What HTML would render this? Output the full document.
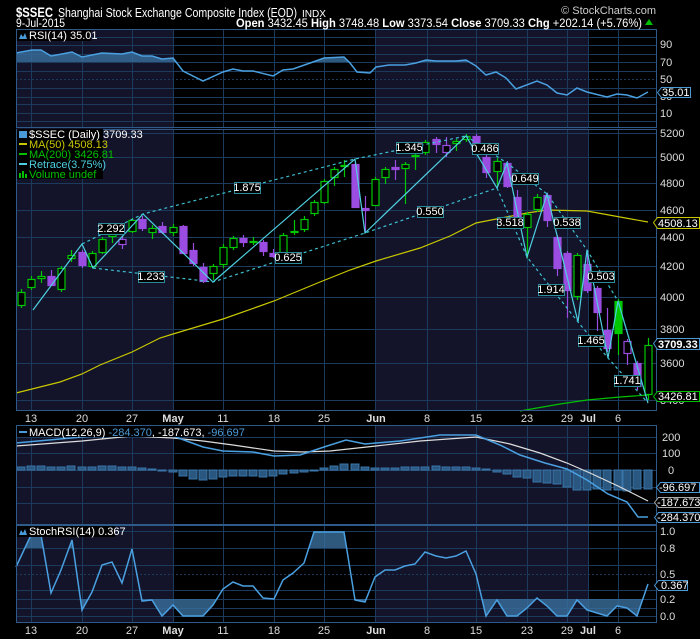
<!DOCTYPE html>
<html><head><meta charset="utf-8"><style>
html,body{margin:0;padding:0;background:#000;}
svg{display:block;font-family:"Liberation Sans",sans-serif;}
</style></head><body>
<svg id="s" width="700" height="639" viewBox="0 0 700 639" xmlns="http://www.w3.org/2000/svg">
<rect width="700" height="639" fill="#000"/>
<g fill="#13132a">
<rect x="16" y="29" width="157" height="381"/><rect x="375" y="29" width="213" height="381"/>
<rect x="16" y="425" width="157" height="197"/><rect x="375" y="425" width="213" height="197"/>
</g>
<g id="grid" stroke="#1c3a5c" stroke-width="1" fill="none"></g>
<g id="draw"></g>
<g fill="none" stroke="#2d5a88" stroke-width="1">
<rect x="16.5" y="29.5" width="640" height="98"/>
<rect x="16.5" y="129.5" width="640" height="281"/>
<rect x="16.5" y="425.5" width="640" height="99"/>
<rect x="16.5" y="525.5" width="640" height="97"/>
</g>
<text x="16" y="17" fill="#fff" font-size="14" font-weight="bold" textLength="37" lengthAdjust="spacingAndGlyphs">$SSEC</text>
<text x="58" y="17" fill="#fff" font-size="12.5" textLength="239" lengthAdjust="spacingAndGlyphs">Shanghai Stock Exchange Composite Index (EOD)</text>
<text x="302" y="17" fill="#fff" font-size="10.5" textLength="24" lengthAdjust="spacingAndGlyphs">INDX</text>
<text x="16" y="27" fill="#fff" font-size="11.5" textLength="49" lengthAdjust="spacingAndGlyphs">9-Jul-2015</text>
<text x="656" y="14" fill="#ccc" font-size="11" text-anchor="end">© StockCharts.com</text>
<text x="236" y="27" fill="#fff" font-size="11.5" textLength="406" lengthAdjust="spacingAndGlyphs"><tspan font-weight="bold">Open</tspan> 3432.45  <tspan font-weight="bold">High</tspan> 3748.48  <tspan font-weight="bold">Low</tspan> 3373.54  <tspan font-weight="bold">Close</tspan> 3709.33  <tspan font-weight="bold">Chg</tspan> +202.14 (+5.76%)</text>
<polygon points="645,25 653,25 649,19" fill="#00c000"/>
<rect x="17" y="30" width="74" height="11" fill="#000"/>
<path d="M19,39 L21,34 L23,37 L25,33 L27,39Z" fill="#4a9ad8"/>
<text x="29" y="39" fill="#fff" font-size="11">RSI(14) 35.01</text>
<rect x="17" y="129" width="86" height="50" fill="#000"/>
<rect x="19" y="131" width="8" height="7" fill="#4a9ad8"/>
<text x="29" y="138" fill="#fff" font-size="11">$SSEC (Daily) 3709.33</text>
<rect x="19" y="143" width="8" height="2" fill="#c8c800"/><text x="29" y="148" fill="#c8c800" font-size="11">MA(50) 4508.13</text>
<rect x="19" y="153" width="8" height="2" fill="#00c000"/><text x="29" y="158" fill="#00c000" font-size="11">MA(200) 3426.81</text>
<rect x="19" y="163" width="8" height="2" fill="#4fd0e0"/><text x="29" y="168" fill="#4fd0e0" font-size="11">Retrace(3.75%)</text>
<path d="M19,178V173H21V178ZM22,178V171H24V178ZM25,178V174H27V178Z" fill="#00c000"/><text x="29" y="178" fill="#00c000" font-size="11">Volume undef</text>
<rect x="17" y="426" width="202" height="11" fill="#000"/>
<rect x="19" y="431" width="8" height="2" fill="#4a9ad8"/>
<text x="29" y="436" fill="#fff" font-size="11">MACD(12,26,9) <tspan fill="#4a9ad8">-284.370</tspan>, -187.673, <tspan fill="#4a9ad8">-96.697</tspan></text>
<rect x="17" y="526" width="98" height="11" fill="#000"/>
<path d="M19,535 L21,530 L23,533 L25,529 L27,535Z" fill="#4a9ad8"/>
<text x="29" y="535" fill="#fff" font-size="11">StochRSI(14) 0.367</text>
<g fill="#ddd" font-size="11">
<text x="660" y="48">90</text><text x="660" y="66">70</text><text x="660" y="83">50</text><text x="660" y="100">30</text><text x="660" y="117">10</text>
<text x="660" y="137">5200</text><text x="660" y="161">5000</text><text x="660" y="187">4800</text><text x="660" y="214">4600</text><text x="660" y="241">4400</text><text x="660" y="270">4200</text><text x="660" y="301">4000</text><text x="660" y="333">3800</text><text x="660" y="367">3600</text><text x="660" y="404">3400</text>
<text x="662" y="441">200</text><text x="662" y="457">100</text><text x="668" y="474">0</text>
<text x="660" y="535">1.0</text><text x="660" y="552">0.8</text><text x="660" y="578">0.5</text><text x="660" y="603">0.2</text><text x="660" y="620">0.0</text>
</g>
<g font-size="11">
<path d="M657.5,92.5 L661.5,87.5 H690.5 V97.5 H661.5Z" fill="#000" stroke="#4a9ad8"/><text x="662" y="96" fill="#fff">35.01</text>
<path d="M653.5,222.5 L657.5,217.5 H699.5 V228.5 H657.5Z" fill="#000" stroke="#c8c800"/><text x="658" y="227" fill="#fff">4508.13</text>
<path d="M653.5,343.5 L657.5,338.5 H699.5 V349.5 H657.5Z" fill="#000" stroke="#4a9ad8"/><text x="658" y="348" fill="#fff" font-weight="bold">3709.33</text>
<path d="M653.5,396.5 L657.5,391.5 H699.5 V401.5 H657.5Z" fill="#000" stroke="#00c000"/><text x="658" y="400" fill="#fff">3426.81</text>
<path d="M656.5,487.5 L660.5,482.5 H699.5 V492.5 H660.5Z" fill="#000" stroke="#4a9ad8"/><text x="659" y="491" fill="#fff">-96.697</text>
<path d="M654.5,502.5 L658.5,497.5 H700.5 V507.5 H658.5Z" fill="#000" stroke="#aaa"/><text x="657" y="506" fill="#fff">-187.673</text>
<path d="M654.5,517.5 L658.5,512.5 H700.5 V522.5 H658.5Z" fill="#000" stroke="#4a9ad8"/><text x="657" y="521" fill="#fff">-284.370</text>
<path d="M654.5,585.5 L658.5,580.5 H687.5 V590.5 H658.5Z" fill="#000" stroke="#4a9ad8"/><text x="661" y="589" fill="#fff">0.367</text>
</g>
<g fill="#ddd" font-size="11" text-anchor="middle">
<text x="31" y="422">13</text><text x="82" y="422">20</text><text x="132" y="422">27</text><text x="173" y="422" font-weight="bold">May</text><text x="223" y="422">11</text><text x="274" y="422">18</text><text x="324" y="422">25</text><text x="376" y="422" font-weight="bold">Jun</text><text x="427" y="422">8</text><text x="476" y="422">15</text><text x="527" y="422">23</text><text x="567" y="422">29</text><text x="588" y="422" font-weight="bold">Jul</text><text x="618" y="422">6</text>
<text x="31" y="634">13</text><text x="82" y="634">20</text><text x="132" y="634">27</text><text x="173" y="634" font-weight="bold">May</text><text x="223" y="634">11</text><text x="274" y="634">18</text><text x="324" y="634">25</text><text x="376" y="634" font-weight="bold">Jun</text><text x="427" y="634">8</text><text x="476" y="634">15</text><text x="527" y="634">23</text><text x="567" y="634">29</text><text x="588" y="634" font-weight="bold">Jul</text><text x="618" y="634">6</text>
</g>
<g id="labels" font-size="11" fill="#fff" text-anchor="middle">
<text x="111" y="232">2.292</text><text x="151" y="280">1.233</text><text x="247" y="191">1.875</text><text x="288" y="261">0.625</text><text x="409" y="151">1.345</text><text x="430" y="215">0.550</text><text x="485" y="152">0.486</text><text x="525" y="182">0.649</text><text x="510" y="226">3.518</text><text x="567" y="226">0.538</text><text x="551" y="293">1.914</text><text x="601" y="280">0.503</text><text x="591" y="344">1.465</text><text x="627" y="384">1.741</text>
</g>
<script>
var NS="http://www.w3.org/2000/svg";
function el(p,t,a){var e=document.createElementNS(NS,t);for(var k in a)e.setAttribute(k,a[k]);p.appendChild(e);return e;}
var G=document.getElementById('grid'),D=document.getElementById('draw');
var vx=[31,82,132,173,223,274,324,375,427,476,527,567,588,618];
vx.forEach(function(x){[[29,128],[129,411],[425,525],[525,623]].forEach(function(r){el(G,'line',{x1:x+.5,x2:x+.5,y1:r[0],y2:r[1]});});});
[37,45,54,62,71,88,97,104,113,121].forEach(function(y){el(G,'line',{x1:16,x2:656,y1:y+.5,y2:y+.5});});
el(G,'line',{x1:16,x2:656,y1:79.5,y2:79.5,'stroke-dasharray':'2,2'});
[133,157,183,210,237,266,297,329,363,400].forEach(function(y){el(G,'line',{x1:16,x2:656,y1:y+.5,y2:y+.5});});
[437,453,470,487,503].forEach(function(y){el(G,'line',{x1:16,x2:656,y1:y+.5,y2:y+.5});});
[531,548,565,590,599,608,616].forEach(function(y){el(G,'line',{x1:16,x2:656,y1:y+.5,y2:y+.5});});
el(G,'line',{x1:16,x2:656,y1:574.5,y2:574.5,'stroke-dasharray':'2,2'});
function pts(a){return a.map(function(p){return p.join(',')}).join(' ');}
var rsi=[[16,53],[32,50],[41,50],[51,56],[62,54],[72,52],[82,57],[102,53],[122,54],[132,52],[142,56],[152,56],[162,59],[173,58],[183,71],[203,81],[223,72],[233,69],[243,71],[253,71],[273,76],[283,70],[293,69],[313,62],[324,58],[344,57],[350,63],[357,72],[370,73],[376,67],[389,65],[405,65],[416,63],[426,60],[436,61],[456,61],[466,60],[476,66],[486,75],[496,72],[506,78],[516,89],[537,81],[547,85],[557,93],[567,95],[577,88],[587,92],[607,97],[617,94],[627,95],[637,98],[648,92]];
var cp=document.createElementNS(NS,'clipPath');cp.id='c70';el(cp,'rect',{x:16,y:29,width:640,height:33});D.appendChild(cp);
el(D,'polygon',{points:'16,62 '+pts(rsi)+' 648,62',fill:'#3a6f9c','fill-opacity':'0.8','clip-path':'url(#c70)'});
el(D,'polyline',{points:pts(rsi),fill:'none',stroke:'#4aa0e0','stroke-width':1.5});
el(D,'polyline',{points:'16,393 40,387 60,382 82,374 100,365 132,352 160,338 173,334 223,319 274,301 320,282 350,270 376,261 420,248 450,236 476,223 527,213 547,210 587,211 620,217 648,222',fill:'none',stroke:'#c8c800','stroke-width':1.2});
el(D,'polyline',{points:'520,411 537,408 560,404 587,400 620,397 648,395',fill:'none',stroke:'#00c000','stroke-width':1.2});
var C=[[21,292,305,289,308,'g'],[31,279,287,276,290,'g'],[41,276,278,271,283,'g'],[51,276,285,270,286,'p'],[61,268,289,266,292,'g'],[71,255,258,250,262,'g'],[82,252,265,250,268,'p'],[92,253,266,251,268,'g'],[102,239,252,237,254,'g'],[112,234,236,229,243,'g'],[122,239,244,236,249,'P'],[132,220,231,218,233,'g'],[142,219,228,216,231,'p'],[152,228,232,225,239,'g'],[162,226,232,222,234,'p'],[173,227,232,224,236,'g'],[183,226,253,225,254,'p'],[193,250,263,243,266,'p'],[203,267,281,263,283,'p'],[213,266,273,264,280,'g'],[223,247,264,244,268,'g'],[233,238,247,236,250,'g'],[243,238,242,235,247,'p'],[253,241,242,237,245,'g'],[263,242,251,240,256,'p'],[273,253,256,249,258,'p'],[283,235,252,233,254,'g'],[294,231,232,220,235,'g'],[304,219,229,216,232,'g'],[314,202,213,200,216,'g'],[324,181,202,179,204,'g'],[334,169,177,167,186,'g'],[344,165,166,160,177,'g'],[355,164,207,162,208,'p'],[365,208,210,196,232,'p'],[375,179,205,177,206,'g'],[385,169,177,167,184,'g'],[395,167,169,160,180,'p'],[405,164,168,162,204,'g'],[415,155,156,154,170,'g'],[425,142,152,140,155,'g'],[436,139,144,137,153,'p'],[446,145,152,137,157,'P'],[456,141,143,139,151,'g'],[466,136,139,134,142,'g'],[476,136,143,134,146,'p'],[486,157,172,153,178,'p'],[497,161,171,158,187,'g'],[507,163,186,161,188,'p'],[517,197,216,190,220,'p'],[527,214,227,212,258,'g'],[537,197,209,194,212,'g'],[547,195,220,193,227,'p'],[557,237,268,235,276,'p'],[567,253,290,251,318,'p'],[577,255,296,253,300,'g'],[587,264,290,250,293,'p'],[597,288,312,286,331,'p'],[607,330,348,308,352,'p'],[618,301,333,299,355,'G'],[627,341,353,339,365,'P'],[637,363,386,361,390,'p'],[648,345,394,338,400,'g']];
C.forEach(function(c){var green=(c[5]=='g'||c[5]=='G'),col=green?'#00c800':'#9a4de0',fill=(c[5]=='p'||c[5]=='G');
el(D,'line',{x1:c[0]+.5,x2:c[0]+.5,y1:c[3],y2:c[4],stroke:col,'stroke-width':1.2});
el(D,'rect',{x:c[0]-3,y:c[1]+.5,width:7,height:Math.max(1,c[2]-c[1]),fill:fill?col:'#000',stroke:col,'stroke-width':1.2});});
var R=[[33,310],[82,244],[93,268],[143,214],[213,282],[355,159],[365,233],[466,136],[497,188],[507,163],[527,257],[547,194],[578,322],[587,250],[608,358],[618,301],[648,403]];
el(D,'polyline',{points:pts(R),fill:'none',stroke:'#4fd0e0','stroke-width':1.2});
var dsh={fill:'none',stroke:'#3cc0d0','stroke-width':1.2,'stroke-dasharray':'3,3'};
[[[82,244],[143,214],[355,159],[466,136]],[[93,268],[213,282],[365,233],[497,188]],[[466,136],[507,163],[547,194],[587,250],[618,301],[648,403]],[[497,188],[527,257],[578,322],[608,358],[648,403]]].forEach(function(a){var o=Object.assign({points:pts(a)},dsh);el(D,'polyline',o);});
var L=[[98,223],[138,271],[234,182],[275,252],[396,142],[417,206],[472,143],[512,173],[497,217],[554,217],[538,284],[588,271],[578,335],[614,375]];
L.forEach(function(b){el(D,'rect',{x:b[0]+.5,y:b[1]+.5,width:26,height:11,fill:'#000',stroke:'#2a8a9a','stroke-width':1});});
var hb=[3,4,4,3,3,4,3,3,4,4,3,3,2,1,0,-2,-6,-9,-10,-9,-7,-6,-6,-6,-7,-6,-4,-3,-2,0,2,4,6,6,3,2,2,2,3,3,3,4,3,3,3,2,1,-2,-4,-7,-8,-12,-13,-14,-17,-20,-20,-19,-20,-20,-21,-19,-19,-18,-16];
var hx=C.map(function(c){return c[0];});
hx.forEach(function(x,i){var h=hb[i]||0;if(h==0)h=-1;var y=h>0?470-h:470;el(D,'rect',{x:x-4,y:y,width:8,height:Math.abs(h),fill:'#2a5780',stroke:'#3a75aa','stroke-width':1});});
el(D,'polyline',{points:'16,446 82,441 132,436 173,438 203,441 233,445 274,451 304,452 330,451 376,446 420,441 476,437 510,444 540,453 567,463 590,473 618,486 648,501',fill:'none',stroke:'#ddd','stroke-width':1.2});
el(D,'polyline',{points:'16,443 82,437 132,433 173,436 203,447 223,451 253,452 274,456 300,455 324,447 346,440 365,444 400,441 440,435 476,435 500,445 520,455 545,463 567,469 587,480 608,494 627,502 638,517 648,517',fill:'none',stroke:'#4aa0e0','stroke-width':1.5});
var st=[[16,567],[31,535],[41,535],[51,593],[61,570],[72,540],[82,610],[92,592],[102,565],[112,562],[122,583],[132,549],[142,601],[152,600],[162,616],[173,605],[183,616],[203,616],[213,605],[223,589],[233,582],[243,586],[253,586],[263,598],[274,599],[283,580],[293,573],[304,563],[314,532],[344,532],[355,600],[365,602],[375,577],[385,570],[395,570],[405,566],[415,564],[425,552],[436,556],[446,558],[456,556],[466,551],[476,574],[486,616],[497,600],[507,616],[517,616],[527,608],[537,598],[547,606],[557,616],[567,616],[577,600],[587,610],[597,613],[607,616],[617,606],[627,608],[637,616],[648,584]];
var c1=document.createElementNS(NS,'clipPath');c1.id='ch';el(c1,'rect',{x:16,y:525,width:640,height:23});D.appendChild(c1);
var c2=document.createElementNS(NS,'clipPath');c2.id='cl';el(c2,'rect',{x:16,y:599,width:640,height:25});D.appendChild(c2);
el(D,'polygon',{points:'16,548 '+pts(st)+' 648,548',fill:'#3a6f9c','fill-opacity':'0.8','clip-path':'url(#ch)'});
el(D,'polygon',{points:'16,599 '+pts(st)+' 648,599',fill:'#3a6f9c','fill-opacity':'0.8','clip-path':'url(#cl)'});
el(D,'polyline',{points:pts(st),fill:'none',stroke:'#4aa0e0','stroke-width':1.5});
</script>
</svg>
</body></html>
